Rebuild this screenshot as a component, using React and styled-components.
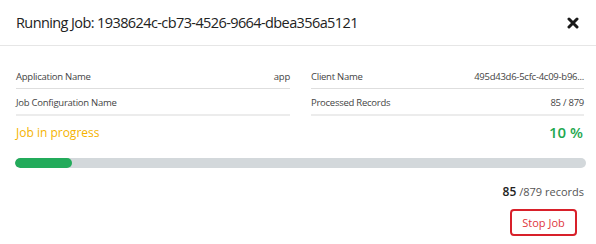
import React from "react";
import styled, { createGlobalStyle } from "styled-components";

const GlobalStyle = createGlobalStyle`
  body {
    margin: 0;
    background: #fff;
    font-family: "Open Sans", "Liberation Sans", sans-serif;
    color: #333;
  }
  * {
    box-sizing: border-box;
  }
`;

const Modal = styled.div`
  width: 596px;
  height: 244px;
  background: #fff;
`;
const Header = styled.div`
  display: flex;
  justify-content: space-between;
  align-items: center;
  height: 46px;
  padding: 0 17px 0 16px;
  border-bottom: 1px solid #e6e6e6;
`;
const Title = styled.h2`
  margin: 0;
  font-size: 14.5px;
  font-weight: 400;
  color: #222;
  letter-spacing: -0.6px;
`;
const Close = styled.button`
  display: flex;
  padding: 0;
  background: none;
  border: 0;
  cursor: pointer;
`;
const Body = styled.div`
  padding: 17px 12px 0 16px;
`;
const Grid = styled.div`
  display: grid;
  grid-template-columns: 274px 273px;
  column-gap: 21px;
`;
const Row = styled.div`
  display: flex;
  justify-content: space-between;
  align-items: center;
  height: ${(p) => (p.last ? "27px" : "26px")};
  padding-top: 1px;
  border-bottom: ${(p) => (p.last ? "2px solid #ececec" : "1px solid #dedede")};
  font-size: 9.5px;
  letter-spacing: -0.25px;
  color: #444;

  span:last-child {
    white-space: nowrap;
  }
`;
const Status = styled.div`
  display: flex;
  justify-content: space-between;
  align-items: center;
  height: 32px;
  padding-right: 1px;
`;
const Progress = styled.span`
  font-size: 12px;
  color: #f5b300;
`;
const Percent = styled.span`
  font-size: 15px;
  font-weight: 600;
  color: #1fa84f;
`;
const Track = styled.div`
  height: 10px;
  margin: 10px 0 0 -1px;
  width: 571px;
  background: #d3d8db;
  border-radius: 5px;
  overflow: hidden;
`;
const Fill = styled.div`
  height: 100%;
  background: #23ab5b;
  border-radius: 5px;
`;
const Records = styled.div`
  margin-top: 15px;
  text-align: right;
  font-size: 11px;
  color: #555;

  b {
    font-size: 12px;
    font-weight: 600;
    color: #222;
  }
`;
const Footer = styled.div`
  display: flex;
  justify-content: flex-end;
  margin-top: 9px;
  padding-right: 7px;
`;
const StopButton = styled.button`
  width: 67px;
  height: 27px;
  padding: 0;
  background: #fff;
  border: 2px solid #d8202a;
  border-radius: 4px;
  font-family: inherit;
  font-size: 11px;
  color: #e0343c;
  cursor: pointer;
`;

const App = () => {
  const processed = 85;
  const total = 879;
  return (
    <Modal>
      <GlobalStyle />
      <Header>
        <Title>Running Job: 1938624c-cb73-4526-9664-dbea356a5121</Title>
        <Close>
          <svg width="12" height="12" viewBox="0 0 12 12">
            <path
              d="M2 2 L10 10 M10 2 L2 10"
              stroke="#1a1a1a"
              strokeWidth="3"
              strokeLinecap="round"
            />
          </svg>
        </Close>
      </Header>
      <Body>
        <Grid>
          <div>
            <Row>
              <span>Application Name</span>
              <span>app</span>
            </Row>
            <Row last>
              <span>Job Configuration Name</span>
              <span></span>
            </Row>
          </div>
          <div>
            <Row>
              <span>Client Name</span>
              <span>495d43d6-5cfc-4c09-b96...</span>
            </Row>
            <Row last>
              <span>Processed Records</span>
              <span>
                {processed} / {total}
              </span>
            </Row>
          </div>
        </Grid>
        <Status>
          <Progress>Job in progress</Progress>
          <Percent>10 %</Percent>
        </Status>
        <Track>
          <Fill style={{ width: "57px" }} />
        </Track>
        <Records>
          <b>{processed}</b> /{total} records
        </Records>
        <Footer>
          <StopButton>Stop Job</StopButton>
        </Footer>
      </Body>
    </Modal>
  );
};

export default App;
